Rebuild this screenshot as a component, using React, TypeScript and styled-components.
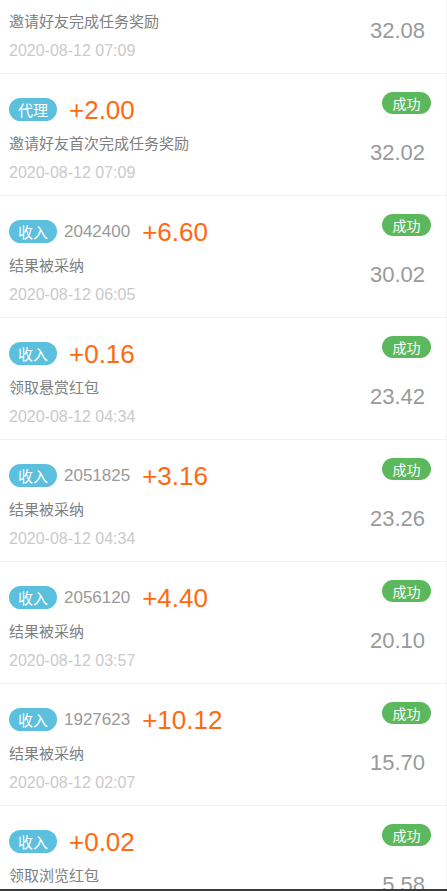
import React from "react";
import styled, { createGlobalStyle } from "styled-components";

const GlobalStyle = createGlobalStyle`
  body {
    margin: 0;
    background: #ffffff;
    font-family: "Liberation Sans", "Noto Sans CJK SC", sans-serif;
  }
`;

type Record = {
  tag: string;
  orderId?: string;
  amount: string;
  desc: string;
  date: string;
  balance: string;
};

const RECORDS: Record[] = [
  { tag: "代理", amount: "+2.00", desc: "邀请好友完成任务奖励", date: "2020-08-12 07:09", balance: "32.08" },
  { tag: "代理", amount: "+2.00", desc: "邀请好友首次完成任务奖励", date: "2020-08-12 07:09", balance: "32.02" },
  { tag: "收入", orderId: "2042400", amount: "+6.60", desc: "结果被采纳", date: "2020-08-12 06:05", balance: "30.02" },
  { tag: "收入", amount: "+0.16", desc: "领取悬赏红包", date: "2020-08-12 04:34", balance: "23.42" },
  { tag: "收入", orderId: "2051825", amount: "+3.16", desc: "结果被采纳", date: "2020-08-12 04:34", balance: "23.26" },
  { tag: "收入", orderId: "2056120", amount: "+4.40", desc: "结果被采纳", date: "2020-08-12 03:57", balance: "20.10" },
  { tag: "收入", orderId: "1927623", amount: "+10.12", desc: "结果被采纳", date: "2020-08-12 02:07", balance: "15.70" },
  { tag: "收入", amount: "+0.02", desc: "领取浏览红包", date: "2020-08-12 01:48", balance: "5.58" },
];

// list is scrolled: the first record's header sits above the viewport
const List = styled.div`
  margin-top: -48px;
  border-right: 1px solid #f2f2f2;
  height: 939px;
  overflow: hidden;
`;

const Row = styled.div`
  display: flex;
  justify-content: space-between;
  height: 122px;
  box-sizing: border-box;
  padding: 0 15px 0 9px;
  border-bottom: 1px solid #f0f0f0;
`;

const Left = styled.div`
  display: flex;
  flex-direction: column;
  padding-top: 24px;
`;

const Header = styled.div`
  display: flex;
  align-items: center;
  height: 23px;
`;

const Tag = styled.span`
  display: inline-flex;
  align-items: center;
  justify-content: center;
  width: 48px;
  height: 23px;
  border-radius: 12px;
  background: #5bc0de;
  color: #ffffff;
  font-family: "Noto Sans CJK SC", sans-serif;
  font-size: 15px;
  margin-right: 7px;
`;

const OrderId = styled.span`
  color: #9a9a9a;
  font-size: 17px;
  margin-right: 7px;
`;

const Amount = styled.span`
  color: #ff6a10;
  font-size: 26px;
  line-height: 26px;
  margin-left: 5px;
`;

const Desc = styled.div`
  margin-top: 12px;
  line-height: 20px;
  color: #808080;
  font-family: "Noto Sans CJK SC", sans-serif;
  font-size: 15px;
`;

const DateText = styled.div`
  margin-top: 10px;
  line-height: 20px;
  color: #cacaca;
  font-size: 16px;
`;

const Right = styled.div`
  display: flex;
  flex-direction: column;
  align-items: flex-end;
  padding-top: 18px;
`;

const Status = styled.span`
  display: inline-flex;
  align-items: center;
  justify-content: center;
  width: 49px;
  height: 22px;
  border-radius: 11px;
  background: #5cb85c;
  color: #ffffff;
  font-family: "Noto Sans CJK SC", sans-serif;
  font-size: 14px;
`;

const Balance = styled.div`
  margin-top: 26px;
  margin-right: 6px;
  line-height: 26px;
  color: #9a9a9a;
  font-size: 22px;
`;

const BottomEdge = styled.div`
  position: fixed;
  left: 0;
  right: 0;
  bottom: 0;
  height: 2px;
  background: #3a3a3a;
`;

const RecordRow = ({ item }: { item: Record }) => (
  <Row>
    <Left>
      <Header>
        <Tag>{item.tag}</Tag>
        {item.orderId && <OrderId>{item.orderId}</OrderId>}
        <Amount>{item.amount}</Amount>
      </Header>
      <Desc>{item.desc}</Desc>
      <DateText>{item.date}</DateText>
    </Left>
    <Right>
      <Status>成功</Status>
      <Balance>{item.balance}</Balance>
    </Right>
  </Row>
);

const App = () => (
  <>
    <GlobalStyle />
    <List>
      {RECORDS.map((item, i) => (
        <RecordRow key={i} item={item} />
      ))}
    </List>
    <BottomEdge />
  </>
);

export default App;
